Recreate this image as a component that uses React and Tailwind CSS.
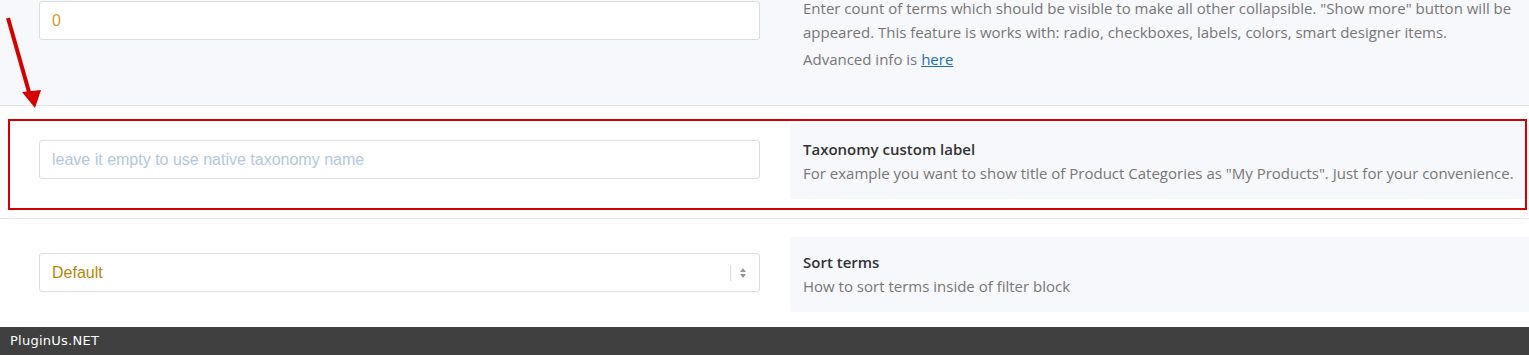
import React from "react";

function Panel({ title, children, className = "" }) {
  return (
    <div
      className={`flex-1 bg-[#f7f8fc] px-[13px] py-[13px] text-[15px] leading-[24px] text-[#777777] ${className}`}
      style={{ fontFamily: '"Open Sans", sans-serif' }}
    >
      {title && <div className="font-semibold text-[#333333]">{title}</div>}
      {children}
    </div>
  );
}

export default function App() {
  return (
    <div className="relative h-[355px] w-full overflow-hidden bg-white">
      {/* row 1 - cut at top */}
      <div className="-mt-[17px] flex items-start gap-[30px] border-b border-[#e5e5e5] bg-[#f7f8fc] pb-[21px] pl-[39px]">
        <input
          type="text"
          defaultValue="0"
          className="mt-[18px] h-[39px] w-[721px] shrink-0 rounded-[3px] border border-[#dddddd] bg-white px-[12px] text-[16px] text-[#d39b33] outline-none"
          style={{ fontFamily: '"Liberation Sans", Arial, sans-serif' }}
        />
        <Panel>
          <p>
            Enter count of terms which should be visible to make all other collapsible. "Show more" button will be
            appeared. This feature is works with: radio, checkboxes, labels, colors, smart designer items.
          </p>
          <p className="mt-[3px]">
            Advanced info is{" "}
            <a href="#" className="text-[#2271b1] underline">
              here
            </a>
          </p>
        </Panel>
      </div>

      {/* row 2 */}
      <div className="relative flex items-start gap-[30px] border-b border-[#e5e5e5] pb-[19px] pl-[39px] pt-[18px]">
        <input
          type="text"
          placeholder="leave it empty to use native taxonomy name"
          className="mt-[16px] h-[39px] w-[721px] shrink-0 rounded-[3px] border border-[#dddddd] bg-white px-[12px] text-[16px] text-[#555] outline-none placeholder:text-[#b4c7de]"
          style={{ fontFamily: '"Liberation Sans", Arial, sans-serif' }}
        />
        <Panel title="Taxonomy custom label" className="min-h-[75px]">
          <p className="whitespace-nowrap">
            For example you want to show title of Product Categories as "My Products". Just for your convenience.
          </p>
        </Panel>
        <div className="pointer-events-none absolute left-[8px] top-[13px] h-[91px] w-[1519px] border-2 border-[#d40000]" />
      </div>

      {/* row 3 */}
      <div className="flex items-start gap-[30px] pb-[15px] pl-[39px] pt-[18px]">
        <div
          className="mt-[16px] flex h-[39px] w-[721px] shrink-0 items-center rounded-[3px] border border-[#dddddd] bg-white pl-[12px] pr-[10px] text-[16px] text-[#b8860b]"
          style={{ fontFamily: '"Liberation Sans", Arial, sans-serif' }}
        >
          <span className="flex-1">Default</span>
          <span className="mr-[8px] h-[16px] w-px bg-[#dddddd]" />
          <svg width="8" height="12" viewBox="0 0 8 12" className="mr-[2px]">
            <path d="M4 1 L7 5 L1 5 Z" fill="#999" />
            <path d="M4 11 L7 7 L1 7 Z" fill="#999" />
          </svg>
        </div>
        <Panel title="Sort terms" className="min-h-[75px]">
          <p>How to sort terms inside of filter block</p>
        </Panel>
      </div>

      {/* footer */}
      <div
        className="flex h-[28px] items-center bg-[#404040] px-[10px] text-[13px] tracking-[0.25px] text-white"
        style={{ fontFamily: '"DejaVu Sans", sans-serif' }}
      >
        PluginUs.NET
      </div>

      {/* annotation arrow */}
      <svg className="pointer-events-none absolute left-0 top-0" width="60" height="115" viewBox="0 0 60 115">
        <line x1="8" y1="18" x2="29" y2="92" stroke="#d40000" strokeWidth="4" />
        <path d="M22 92 L41 90 L35 108 Z" fill="#d40000" />
      </svg>
    </div>
  );
}
